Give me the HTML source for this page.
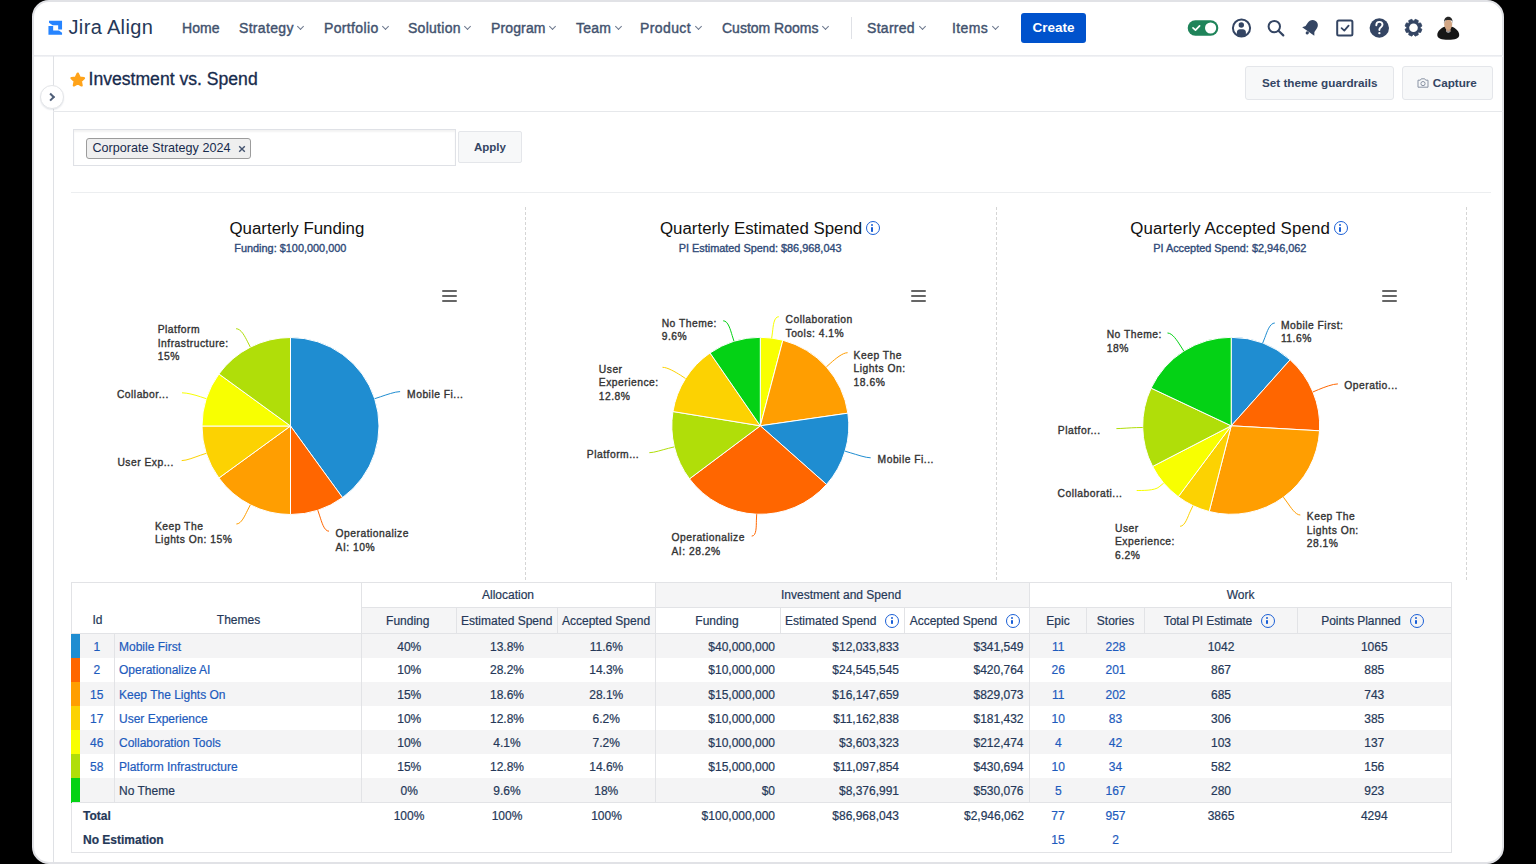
<!DOCTYPE html>
<html><head><meta charset="utf-8">
<style>
*{box-sizing:border-box;margin:0;padding:0}
html,body{width:1536px;height:864px;overflow:hidden;background:#000;font-family:"Liberation Sans",sans-serif;position:relative}
#win{position:absolute;left:32px;top:0;width:1472px;height:864px;background:#fff;border-radius:17px;border:2px solid #e1e2e6}
.a{position:absolute}
.ni{position:absolute;top:19.6px;font-size:14px;color:#42526e;white-space:nowrap;-webkit-text-stroke:0.4px #42526e;line-height:16px}
.chev{display:inline-block;width:5px;height:5px;border-right:1.4px solid #6b778c;border-bottom:1.4px solid #6b778c;transform:rotate(45deg);margin-left:4.6px;position:relative;top:-4px}
.btn{position:absolute;top:66px;height:34px;background:#f7f8f9;border:1px solid #e4e6ea;border-radius:3px;font-size:11.7px;font-weight:bold;color:#344563;line-height:32px;white-space:nowrap}
.ct{position:absolute;font-size:16.85px;color:#111;white-space:nowrap;line-height:19px}
.cs{position:absolute;font-size:10.9px;color:#2f4a78;white-space:nowrap;line-height:13px;-webkit-text-stroke:0.35px #2f4a78}
.pl{position:absolute;font-size:10.3px;letter-spacing:0.5px;font-weight:normal;-webkit-text-stroke:0.35px #333;color:#333;line-height:13.6px;white-space:nowrap}
.info{position:absolute;width:14px;height:14px;border:1.8px solid #1a5fd6;border-radius:50%}
.info:before{content:"";position:absolute;left:4.2px;top:2.3px;width:2px;height:2px;background:#1a5fd6;border-radius:1px}
.info:after{content:"";position:absolute;left:4.2px;top:5.2px;width:2px;height:4.2px;background:#1a5fd6;border-radius:0.8px}
.hamb{position:absolute;width:15px;height:2.5px;background:#666;border-radius:1.2px}
.dash{position:absolute;top:207px;height:375px;width:1px;background:repeating-linear-gradient(to bottom,#d5d5d5 0,#d5d5d5 3px,transparent 3px,transparent 5px)}
table{position:absolute;left:71px;top:582px;border-collapse:collapse;table-layout:fixed;width:1381px;font-size:12px;color:#253858;-webkit-text-stroke:0.2px currentColor}
td,th{height:24px;padding:0 4px;white-space:nowrap;overflow:hidden;font-weight:normal;position:relative}
th{border:1px solid #e2e3e6;color:#253858}
tr.g1 th{height:25px}
tr.g2 th{height:26px}
tr.odd td,tr.even td{height:24.1px;padding-top:1.6px}
tr.odd td{background:#f4f4f5}
tr.even td{background:#fff}
td.bar{padding:0}
td.bl{border-left:1px solid #e2e3e6}
td.id{text-align:center;border-right:1px solid #e2e3e6}
td.th{text-align:left;padding-left:4px}
td.c{text-align:center}
td.r{text-align:right;padding-right:5.5px}
td.er{border-right:1px solid #e2e3e6}
tr.nb td{border-bottom:1px solid #e2e3e6}
.lnk{color:#1d5bbd}
.gray{background:#f5f5f6}
tr.tot td{background:#fff;height:25px;padding-top:2px}
tr.t1 td{border-top:1px solid #e2e3e6;vertical-align:middle;padding-top:2.5px}
th .info{position:relative;display:inline-block;vertical-align:-3px;margin-left:6px}
</style></head><body>
<div id="win"></div>
<!-- nav -->
<div class="a" style="left:34px;top:55px;width:1469px;height:2px;background:linear-gradient(#e6e8ec,#f4f5f7)"></div>
<svg class="a" style="left:44px;top:16px" width="24" height="24" viewBox="0 0 864 864"><path d="M180 170 L650 170 L650 490 L510 490 L510 330 L310 330 L180 240 Z" fill="#2684ff"/><path d="M160 360 L330 360 L330 520 L540 520 L650 600 L650 675 L160 675 Z" fill="#2684ff"/></svg>
<div class="a" style="left:68.5px;top:14.5px;font-size:20px;color:#253858;line-height:24px;white-space:nowrap;letter-spacing:0.35px">Jira Align</div>
<div class="ni" style="left:182px;letter-spacing:0.1px">Home</div>
<div class="ni" style="left:239px;letter-spacing:0.32px">Strategy<span class="chev"></span></div>
<div class="ni" style="left:324px;letter-spacing:0.36px">Portfolio<span class="chev"></span></div>
<div class="ni" style="left:408px;letter-spacing:0.27px">Solution<span class="chev"></span></div>
<div class="ni" style="left:491px;letter-spacing:0.13px">Program<span class="chev"></span></div>
<div class="ni" style="left:576px;letter-spacing:0.2px">Team<span class="chev"></span></div>
<div class="ni" style="left:640px;letter-spacing:0.39px">Product<span class="chev"></span></div>
<div class="ni" style="left:722px;letter-spacing:0px">Custom Rooms<span class="chev"></span></div>
<div class="a" style="left:851px;top:17px;width:1px;height:22px;background:#dfe1e6"></div>
<div class="ni" style="left:867px;letter-spacing:0.29px">Starred<span class="chev"></span></div>
<div class="ni" style="left:952px;letter-spacing:0.36px">Items<span class="chev"></span></div>
<div class="a" style="left:1021px;top:13px;width:65px;height:30px;background:#0052cc;border-radius:3px;color:#fff;font-weight:bold;font-size:13.5px;text-align:center;line-height:30px">Create</div>
<!-- right icons -->
<svg class="a" style="left:1180px;top:10px" width="290" height="35" viewBox="1180 10 290 35">
 <rect x="1187.7" y="20.2" width="30.6" height="15.5" rx="7.75" fill="#1f845a"/>
 <circle cx="1210.6" cy="28" r="5.6" fill="#fff"/>
 <path d="M1193 27.9 L1195.5 30.2 L1199.6 25.8" stroke="#fff" stroke-width="1.7" fill="none" stroke-linecap="round" stroke-linejoin="round"/>
 <circle cx="1241.5" cy="28" r="8.6" stroke="#344563" stroke-width="2" fill="none"/>
 <circle cx="1241.3" cy="25" r="2.7" fill="#344563"/>
 <path d="M1236.9 35.6 V32.4 C1236.9 30.6 1238 29.3 1240 29.3 h2.8 C1244.8 29.3 1245.9 30.6 1245.9 32.4 V35.6 C1244.6 36.3 1243 36.7 1241.4 36.7 C1239.8 36.7 1238.2 36.3 1236.9 35.6 Z" fill="#344563"/>
 <circle cx="1274.3" cy="26.6" r="5.7" stroke="#344563" stroke-width="2" fill="none"/>
 <path d="M1278.5 30.8 L1283.3 35.4" stroke="#344563" stroke-width="2.2" stroke-linecap="round"/>
 <g transform="rotate(35 1311 27.5)"><path d="M1311 19.5 c-3.6 0 -5.4 2.8 -5.4 6.2 v3.6 l-2 3 h14.8 l-2 -3 v-3.6 c0 -3.4 -1.8 -6.2 -5.4 -6.2 z" fill="#344563"/><circle cx="1311" cy="34" r="1.6" fill="#344563"/></g>
 <rect x="1337.2" y="20.4" width="15.2" height="15.2" rx="1.5" stroke="#344563" stroke-width="2" fill="none"/>
 <path d="M1341.6 28.2 L1344.3 30.6 L1348.6 25.6" stroke="#344563" stroke-width="1.8" fill="none" stroke-linecap="round" stroke-linejoin="round"/>
 <circle cx="1379.3" cy="28" r="9.7" fill="#344563"/>
 <path d="M1376.3 25.3 c0 -2 1.4 -3.4 3.1 -3.4 c1.8 0 3.1 1.2 3.1 2.9 c0 2.3 -3.1 2.4 -3.1 4.6 v0.6" stroke="#fff" stroke-width="1.9" fill="none" stroke-linecap="round"/>
 <circle cx="1379.4" cy="33.2" r="1.15" fill="#fff"/>
 <g fill="#344563">
  <path id="gear" d="M1413.92 21.01 L1415.15 19.26 L1418.30 20.57 L1417.93 22.67 L1418.53 23.27 L1420.63 22.90 L1421.94 26.05 L1420.19 27.28 L1420.19 28.12 L1421.94 29.35 L1420.63 32.50 L1418.53 32.13 L1417.93 32.73 L1418.30 34.83 L1415.15 36.14 L1413.92 34.39 L1413.08 34.39 L1411.85 36.14 L1408.70 34.83 L1409.07 32.73 L1408.47 32.13 L1406.37 32.50 L1405.06 29.35 L1406.81 28.12 L1406.81 27.28 L1405.06 26.05 L1406.37 22.90 L1408.47 23.27 L1409.07 22.67 L1408.70 20.57 L1411.85 19.26 L1413.08 21.01 Z" stroke="#344563" stroke-width="0.8" stroke-linejoin="round"/>
 </g>
 <circle cx="1413.5" cy="27.7" r="4.3" fill="#fff"/>
 <path d="M1437.3 35 C1437.3 31 1441 28.3 1444.5 26.8 L1452 26.8 C1455.5 28.3 1459.2 31 1459.2 35 C1459.2 38.6 1455 39.7 1448.2 39.7 C1441.5 39.7 1437.3 38.6 1437.3 35 Z" fill="#161616"/>
 <path d="M1446 27 h4.6 v4.5 l-2.3 1.2 l-2.3 -1.2 z" fill="#b9967c"/>
 <path d="M1446.3 30.5 l2 1.2 l2 -1.2 v1.5 l-2 1 l-2 -1 z" fill="#8a9099"/>
 <ellipse cx="1448.2" cy="24.6" rx="4" ry="5.1" fill="#d2a684"/>
 <path d="M1444 24 C1443.6 18.8 1445.5 16.8 1448.3 16.8 C1451.1 16.8 1453 18.8 1452.6 24 L1452.2 21 C1450.5 19.6 1446.2 19.6 1444.5 21 Z" fill="#262626"/>
</svg>
<!-- sidebar -->
<div class="a" style="left:52.5px;top:56px;width:1px;height:807px;background:#dfe1e5"></div>
<div class="a" style="left:40px;top:85px;width:24px;height:24px;border-radius:50%;background:#fff;border:1px solid #e3e5e8;box-shadow:0 1px 1.5px rgba(9,30,66,0.10)"></div>
<div class="a" style="left:48.3px;top:94.3px;width:5.6px;height:5.6px;border-right:2px solid #505f79;border-top:2px solid #505f79;transform:rotate(45deg)"></div>
<!-- header -->
<svg class="a" style="left:69px;top:71px" width="17.5" height="17.5" viewBox="0 0 24 24"><path d="M12 3.6l2.6 5.4 5.9.8-4.3 4.1 1.1 5.8L12 16.9l-5.3 2.8 1.1-5.8-4.3-4.1 5.9-.8z" fill="#ffa31a" stroke="#ffa31a" stroke-width="3.2" stroke-linejoin="round"/></svg>
<div class="a" style="left:88.5px;top:68px;font-size:17.6px;color:#172b4d;-webkit-text-stroke:0.3px #172b4d;white-space:nowrap;line-height:22px">Investment vs. Spend</div>
<div class="btn" style="left:1245px;width:149px;padding-left:16px">Set theme guardrails</div>
<div class="btn" style="left:1402px;width:91px;padding-left:29.7px">Capture</div>
<svg class="a" style="left:1417px;top:78px" width="12" height="10" viewBox="0 0 12 10"><path d="M1 2.2 h2.3 l1 -1.4 h3.4 l1 1.4 h2.3 v7 h-10 z" fill="none" stroke="#8993a4" stroke-width="1"/><circle cx="6" cy="5.6" r="2.1" fill="none" stroke="#8993a4" stroke-width="1"/></svg>
<div class="a" style="left:53px;top:111px;width:1450px;height:1px;background:#e6e8eb"></div>
<!-- filter -->
<div class="a" style="left:73px;top:129px;width:383px;height:37px;border:1px solid #dfe1e6;background:#fff;box-shadow:inset 0 2px 2px rgba(0,0,0,0.05)"></div>
<div class="a" style="left:85.5px;top:137.5px;width:165px;height:21px;border:1px solid #9c9c9c;border-radius:3px;background:#efefef;font-size:12.6px;color:#172b4d;line-height:19px;padding-left:6px;white-space:nowrap">Corporate Strategy 2024</div>
<svg class="a" style="left:238px;top:144.5px" width="8" height="8" viewBox="0 0 8 8"><path d="M1.2 1.2 L6.8 6.8 M6.8 1.2 L1.2 6.8" stroke="#42526e" stroke-width="1.4"/></svg>
<div class="a" style="left:458px;top:131px;width:64px;height:32px;border:1px solid #e4e6ea;background:#f7f8f9;border-radius:2px;font-size:11.5px;font-weight:bold;color:#344563;text-align:center;line-height:30px">Apply</div>
<div class="a" style="left:71px;top:192px;width:1420px;height:1px;background:#eceef0"></div>
<!-- dashed dividers -->
<div class="dash" style="left:525px"></div>
<div class="dash" style="left:996px"></div>
<div class="dash" style="left:1466px"></div>
<!-- chart titles -->
<div class="ct" style="left:229.5px;top:218.8px">Quarterly Funding</div>
<div class="cs" style="left:234.3px;top:241.5px">Funding: $100,000,000</div>
<div class="ct" style="left:660px;top:218.8px">Quarterly Estimated Spend</div><div class="info" style="left:865.9px;top:221.2px"></div>
<div class="cs" style="left:678.7px;top:241.5px">PI Estimated Spend: $86,968,043</div>
<div class="ct" style="left:1130.2px;top:218.8px;letter-spacing:0.13px">Quarterly Accepted Spend</div><div class="info" style="left:1334px;top:221.2px"></div>
<div class="cs" style="left:1153.2px;top:241.5px">PI Accepted Spend: $2,946,062</div>
<div class="hamb" style="left:442px;top:289.8px"></div><div class="hamb" style="left:442px;top:294.7px"></div><div class="hamb" style="left:442px;top:299.6px"></div>
<div class="hamb" style="left:911px;top:289.8px"></div><div class="hamb" style="left:911px;top:294.7px"></div><div class="hamb" style="left:911px;top:299.6px"></div>
<div class="hamb" style="left:1382px;top:289.8px"></div><div class="hamb" style="left:1382px;top:294.7px"></div><div class="hamb" style="left:1382px;top:299.6px"></div>
<!-- table -->
<table>
 <colgroup><col style="width:8px"><col style="width:35px"><col style="width:247px"><col style="width:95px"><col style="width:101px"><col style="width:98px"><col style="width:125px"><col style="width:124px"><col style="width:125px"><col style="width:57px"><col style="width:58px"><col style="width:153px"><col style="width:154px"></colgroup>
 <tr class="g1"><th colspan="3" rowspan="2" style="vertical-align:bottom;padding:0 0 6px 0"><span style="display:inline-block;width:43px;text-align:center;padding-left:8px">Id</span><span style="display:inline-block;width:247px;text-align:center">Themes</span></th><th colspan="3" style="padding-right:5px">Allocation</th><th colspan="3" class="gray" style="padding-right:7px">Investment and Spend</th><th colspan="4">Work</th></tr>
 <tr class="g2"><th class="gray" style="padding-right:6.5px">Funding</th><th class="gray" style="padding-right:6.5px">Estimated Spend</th><th class="gray" style="padding-right:5px">Accepted Spend</th><th style="padding-right:6px">Funding</th><th style="padding-right:7px">Estimated Spend<span class="info" style="margin-left:9px"></span></th><th style="padding-right:8.5px;letter-spacing:-0.05px">Accepted Spend<span class="info" style="margin-left:8.5px"></span></th><th class="gray">Epic</th><th class="gray">Stories</th><th class="gray" style="letter-spacing:-0.1px;padding-right:7px">Total PI Estimate<span class="info" style="margin-left:9px"></span></th><th class="gray" style="letter-spacing:-0.1px;padding-right:8px">Points Planned<span class="info" style="margin-left:9px"></span></th></tr>
<tr class="odd"><td class="bar" style="background:#1f8dd1;border-left:1px solid #1f8dd1"></td><td class="id lnk">1</td><td class="th lnk">Mobile First</td><td class="c bl">40%</td><td class="c">13.8%</td><td class="c">11.6%</td><td class="r bl">$40,000,000</td><td class="r">$12,033,833</td><td class="r">$341,549</td><td class="c bl lnk">11</td><td class="c lnk">228</td><td class="c">1042</td><td class="c er">1065</td></tr>
<tr class="even"><td class="bar" style="background:#ff6600;border-left:1px solid #ff6600"></td><td class="id lnk">2</td><td class="th lnk">Operationalize AI</td><td class="c bl">10%</td><td class="c">28.2%</td><td class="c">14.3%</td><td class="r bl">$10,000,000</td><td class="r">$24,545,545</td><td class="r">$420,764</td><td class="c bl lnk">26</td><td class="c lnk">201</td><td class="c">867</td><td class="c er">885</td></tr>
<tr class="odd"><td class="bar" style="background:#ff9e01;border-left:1px solid #ff9e01"></td><td class="id lnk">15</td><td class="th lnk">Keep The Lights On</td><td class="c bl">15%</td><td class="c">18.6%</td><td class="c">28.1%</td><td class="r bl">$15,000,000</td><td class="r">$16,147,659</td><td class="r">$829,073</td><td class="c bl lnk">11</td><td class="c lnk">202</td><td class="c">685</td><td class="c er">743</td></tr>
<tr class="even"><td class="bar" style="background:#fcd202;border-left:1px solid #fcd202"></td><td class="id lnk">17</td><td class="th lnk">User Experience</td><td class="c bl">10%</td><td class="c">12.8%</td><td class="c">6.2%</td><td class="r bl">$10,000,000</td><td class="r">$11,162,838</td><td class="r">$181,432</td><td class="c bl lnk">10</td><td class="c lnk">83</td><td class="c">306</td><td class="c er">385</td></tr>
<tr class="odd"><td class="bar" style="background:#f8ff01;border-left:1px solid #f8ff01"></td><td class="id lnk">46</td><td class="th lnk">Collaboration Tools</td><td class="c bl">10%</td><td class="c">4.1%</td><td class="c">7.2%</td><td class="r bl">$10,000,000</td><td class="r">$3,603,323</td><td class="r">$212,474</td><td class="c bl lnk">4</td><td class="c lnk">42</td><td class="c">103</td><td class="c er">137</td></tr>
<tr class="even"><td class="bar" style="background:#b0de09;border-left:1px solid #b0de09"></td><td class="id lnk">58</td><td class="th lnk">Platform Infrastructure</td><td class="c bl">15%</td><td class="c">12.8%</td><td class="c">14.6%</td><td class="r bl">$15,000,000</td><td class="r">$11,097,854</td><td class="r">$430,694</td><td class="c bl lnk">10</td><td class="c lnk">34</td><td class="c">582</td><td class="c er">156</td></tr>
<tr class="odd"><td class="bar" style="background:#04d215;border-left:1px solid #04d215"></td><td class="id lnk"></td><td class="th ">No Theme</td><td class="c bl">0%</td><td class="c">9.6%</td><td class="c">18%</td><td class="r bl">$0</td><td class="r">$8,376,991</td><td class="r">$530,076</td><td class="c bl lnk">5</td><td class="c lnk">167</td><td class="c">280</td><td class="c er">923</td></tr>
 <tr class="tot t1"><td colspan="3" style="font-weight:bold;padding-left:11px;border-left:1px solid #e2e3e6">Total</td><td class="c">100%</td><td class="c">100%</td><td class="c">100%</td><td class="r">$100,000,000</td><td class="r">$86,968,043</td><td class="r">$2,946,062</td><td class="c lnk">77</td><td class="c lnk">957</td><td class="c">3865</td><td class="c er">4294</td></tr>
 <tr class="tot nb"><td colspan="3" style="font-weight:bold;padding-left:11px;border-left:1px solid #e2e3e6">No Estimation</td><td></td><td></td><td></td><td></td><td></td><td></td><td class="c lnk">15</td><td class="c lnk">2</td><td></td><td class="er"></td></tr>
</table>
<svg class="a" style="left:0;top:0" width="1536" height="864" viewBox="0 0 1536 864">
<path d="M290.50 426.00 L290.50 337.50 A88.5 88.5 0 0 1 342.52 497.60 Z" fill="#1f8dd1" stroke="#fff" stroke-width="1" stroke-linejoin="round"/>
<path d="M290.50 426.00 L342.52 497.60 A88.5 88.5 0 0 1 290.50 514.50 Z" fill="#ff6600" stroke="#fff" stroke-width="1" stroke-linejoin="round"/>
<path d="M290.50 426.00 L290.50 514.50 A88.5 88.5 0 0 1 218.90 478.02 Z" fill="#ff9e01" stroke="#fff" stroke-width="1" stroke-linejoin="round"/>
<path d="M290.50 426.00 L218.90 478.02 A88.5 88.5 0 0 1 202.00 426.00 Z" fill="#fcd202" stroke="#fff" stroke-width="1" stroke-linejoin="round"/>
<path d="M290.50 426.00 L202.00 426.00 A88.5 88.5 0 0 1 218.90 373.98 Z" fill="#f8ff01" stroke="#fff" stroke-width="1" stroke-linejoin="round"/>
<path d="M290.50 426.00 L218.90 373.98 A88.5 88.5 0 0 1 290.50 337.50 Z" fill="#b0de09" stroke="#fff" stroke-width="1" stroke-linejoin="round"/>
<path d="M760.30 425.80 L760.30 337.30 A88.5 88.5 0 0 1 782.87 340.23 Z" fill="#f8ff01" stroke="#fff" stroke-width="1" stroke-linejoin="round"/>
<path d="M760.30 425.80 L782.87 340.23 A88.5 88.5 0 0 1 847.90 413.18 Z" fill="#ff9e01" stroke="#fff" stroke-width="1" stroke-linejoin="round"/>
<path d="M760.30 425.80 L847.90 413.18 A88.5 88.5 0 0 1 826.55 484.48 Z" fill="#1f8dd1" stroke="#fff" stroke-width="1" stroke-linejoin="round"/>
<path d="M760.30 425.80 L826.55 484.48 A88.5 88.5 0 0 1 689.48 478.87 Z" fill="#ff6600" stroke="#fff" stroke-width="1" stroke-linejoin="round"/>
<path d="M760.30 425.80 L689.48 478.87 A88.5 88.5 0 0 1 672.96 411.53 Z" fill="#b0de09" stroke="#fff" stroke-width="1" stroke-linejoin="round"/>
<path d="M760.30 425.80 L672.96 411.53 A88.5 88.5 0 0 1 710.05 352.95 Z" fill="#fcd202" stroke="#fff" stroke-width="1" stroke-linejoin="round"/>
<path d="M760.30 425.80 L710.05 352.95 A88.5 88.5 0 0 1 760.30 337.30 Z" fill="#04d215" stroke="#fff" stroke-width="1" stroke-linejoin="round"/>
<path d="M1231.20 425.80 L1231.20 337.30 A88.5 88.5 0 0 1 1290.14 359.78 Z" fill="#1f8dd1" stroke="#fff" stroke-width="1" stroke-linejoin="round"/>
<path d="M1231.20 425.80 L1290.14 359.78 A88.5 88.5 0 0 1 1319.56 430.80 Z" fill="#ff6600" stroke="#fff" stroke-width="1" stroke-linejoin="round"/>
<path d="M1231.20 425.80 L1319.56 430.80 A88.5 88.5 0 0 1 1209.19 511.52 Z" fill="#ff9e01" stroke="#fff" stroke-width="1" stroke-linejoin="round"/>
<path d="M1231.20 425.80 L1209.19 511.52 A88.5 88.5 0 0 1 1178.29 496.74 Z" fill="#fcd202" stroke="#fff" stroke-width="1" stroke-linejoin="round"/>
<path d="M1231.20 425.80 L1178.29 496.74 A88.5 88.5 0 0 1 1152.60 466.47 Z" fill="#f8ff01" stroke="#fff" stroke-width="1" stroke-linejoin="round"/>
<path d="M1231.20 425.80 L1152.60 466.47 A88.5 88.5 0 0 1 1151.12 388.12 Z" fill="#b0de09" stroke="#fff" stroke-width="1" stroke-linejoin="round"/>
<path d="M1231.20 425.80 L1151.12 388.12 A88.5 88.5 0 0 1 1231.20 337.30 Z" fill="#04d215" stroke="#fff" stroke-width="1" stroke-linejoin="round"/>
<path d="M400.1 391.6 C395.1 391.6 386.1 394.9 380.4 396.8 L374.7 398.7" stroke="#1f8dd1" fill="none" stroke-width="1"/>
<path d="M329.0 531.2 C324.0 531.2 321.6 521.6 319.7 515.9 L317.8 510.2" stroke="#ff6600" fill="none" stroke-width="1"/>
<path d="M236.4 524.0 C241.4 524.0 244.9 515.5 247.6 510.2 L250.3 504.9" stroke="#ff9e01" fill="none" stroke-width="1"/>
<path d="M181.7 460.6 C186.7 460.6 194.9 457.1 200.6 455.2 L206.3 453.3" stroke="#fcd202" fill="none" stroke-width="1"/>
<path d="M182.0 392.8 C187.0 392.8 194.9 394.9 200.6 396.8 L206.3 398.7" stroke="#f8ff01" fill="none" stroke-width="1"/>
<path d="M236.1 328.7 C241.1 328.7 244.9 336.5 247.6 341.8 L250.3 347.1" stroke="#b0de09" fill="none" stroke-width="1"/>
<path d="M778.8 316.7 C773.8 316.7 773.2 326.1 772.5 332.1 L771.7 338.0" stroke="#f8ff01" fill="none" stroke-width="1"/>
<path d="M847.6 352.7 C842.6 352.7 835.3 358.9 830.8 362.9 L826.4 366.9" stroke="#ff9e01" fill="none" stroke-width="1"/>
<path d="M870.7 457.8 C865.7 457.8 856.6 454.6 850.8 452.9 L845.1 451.2" stroke="#1f8dd1" fill="none" stroke-width="1"/>
<path d="M751.7 536.1 C756.7 536.1 756.2 526.2 756.4 520.2 L756.7 514.2" stroke="#ff6600" fill="none" stroke-width="1"/>
<path d="M649.3 452.7 C654.3 452.7 662.7 449.7 668.5 448.3 L674.3 446.9" stroke="#b0de09" fill="none" stroke-width="1"/>
<path d="M662.5 367.3 C667.5 367.3 675.4 372.0 680.5 375.2 L685.5 378.5" stroke="#fcd202" fill="none" stroke-width="1"/>
<path d="M723.2 320.8 C728.2 320.8 730.4 329.8 732.2 335.6 L734.0 341.3" stroke="#04d215" fill="none" stroke-width="1"/>
<path d="M1274.8 323.0 C1269.8 323.0 1267.0 331.9 1264.9 337.5 L1262.7 343.1" stroke="#1f8dd1" fill="none" stroke-width="1"/>
<path d="M1337.9 383.9 C1332.9 383.9 1324.0 387.3 1318.5 389.6 L1313.0 391.9" stroke="#ff6600" fill="none" stroke-width="1"/>
<path d="M1300.3 515.0 C1295.3 515.0 1290.5 506.9 1287.0 502.1 L1283.4 497.2" stroke="#ff9e01" fill="none" stroke-width="1"/>
<path d="M1180.1 526.3 C1185.1 526.3 1187.8 516.5 1190.4 511.1 L1193.0 505.6" stroke="#fcd202" fill="none" stroke-width="1"/>
<path d="M1136.7 490.5 C1141.7 490.5 1154.6 490.8 1159.1 486.9 L1163.7 483.1" stroke="#f8ff01" fill="none" stroke-width="1"/>
<path d="M1116.4 428.6 C1121.4 428.6 1130.7 427.7 1136.7 427.6 L1142.7 427.5" stroke="#b0de09" fill="none" stroke-width="1"/>
<path d="M1167.5 333.0 C1172.5 333.0 1177.3 340.9 1180.6 346.0 L1183.8 351.1" stroke="#04d215" fill="none" stroke-width="1"/>
</svg>
<div class="pl" style="left:157.7px;top:323.3px">Platform<br>Infrastructure:<br>15%</div>
<div class="pl" style="left:116.9px;top:388.1px">Collabor...</div>
<div class="pl" style="left:117.4px;top:455.7px">User Exp...</div>
<div class="pl" style="left:154.9px;top:519.9px">Keep The<br>Lights On: 15%</div>
<div class="pl" style="left:335.6px;top:527.2px">Operationalize<br>AI: 10%</div>
<div class="pl" style="left:407.1px;top:387.8px">Mobile Fi...</div>
<div class="pl" style="left:661.7px;top:316.9px">No Theme:<br>9.6%</div>
<div class="pl" style="left:598.8px;top:362.6px">User<br>Experience:<br>12.8%</div>
<div class="pl" style="left:785.5px;top:313.1px">Collaboration<br>Tools: 4.1%</div>
<div class="pl" style="left:853.6px;top:348.7px">Keep The<br>Lights On:<br>18.6%</div>
<div class="pl" style="left:586.8px;top:448.0px">Platform...</div>
<div class="pl" style="left:671.5px;top:531.4px">Operationalize<br>AI: 28.2%</div>
<div class="pl" style="left:877.6px;top:452.6px">Mobile Fi...</div>
<div class="pl" style="left:1106.7px;top:328.4px">No Theme:<br>18%</div>
<div class="pl" style="left:1057.8px;top:424.4px">Platfor...</div>
<div class="pl" style="left:1280.9px;top:318.5px">Mobile First:<br>11.6%</div>
<div class="pl" style="left:1344.3px;top:379.2px">Operatio...</div>
<div class="pl" style="left:1057.6px;top:486.6px">Collaborati...</div>
<div class="pl" style="left:1115.0px;top:521.7px">User<br>Experience:<br>6.2%</div>
<div class="pl" style="left:1306.8px;top:510.2px">Keep The<br>Lights On:<br>28.1%</div>
</body></html>
